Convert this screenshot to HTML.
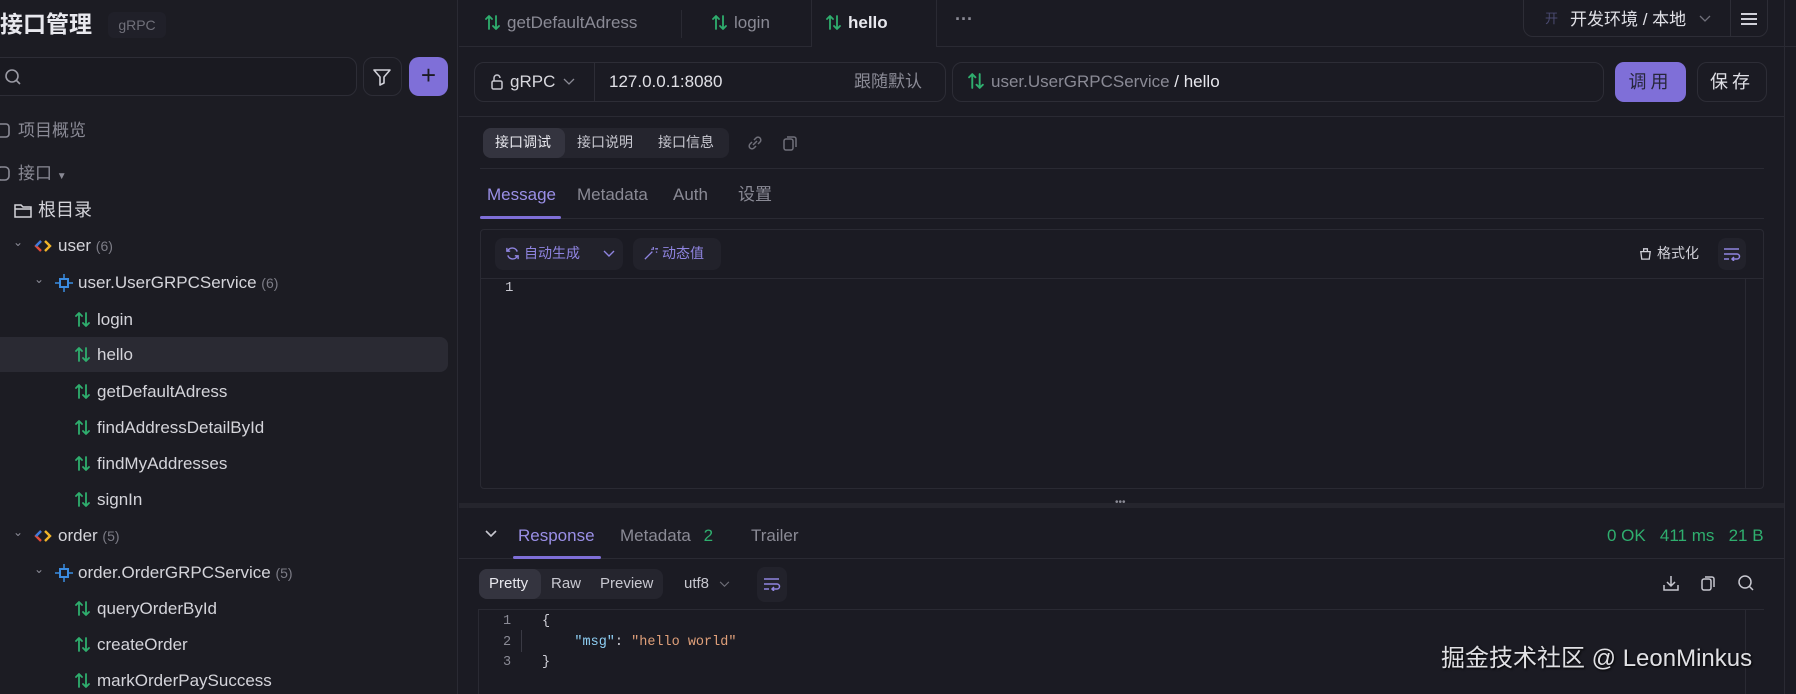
<!DOCTYPE html>
<html><head><meta charset="utf-8">
<style>
*{box-sizing:border-box;margin:0;padding:0}
body{width:1796px;height:694px;background:#1b1b23;font-family:"Liberation Sans","Noto Sans CJK SC",sans-serif;color:#cfcfd6;position:relative;overflow:hidden}
.a{position:absolute;white-space:nowrap;line-height:1.25}
.g{color:#2fae6e}
.mu{color:#8a8a95}
.ln{position:absolute;background:#2a2a33;height:1px}
.tree{font-size:17px;color:#d4d4da}
.cnt{color:#7c7c86;font-size:14px}
svg{position:absolute}
svg.ar{position:static;display:inline-block;vertical-align:-3px;margin-right:6px}
</style></head><body>
<svg width="0" height="0" style="position:absolute"><defs><g id="ar"><path d="M4 15V2M1 5l3-3 3 3M11 2v13M8 12l3 3 3-3" fill="none" stroke="#2fae6e" stroke-width="1.8" stroke-linecap="round" stroke-linejoin="round"/></g></defs></svg>
<!-- sidebar -->
<div class="a" style="left:0;top:0;width:458px;height:694px;background:#1c1c23;border-right:1px solid #2a2a33"></div>
<div class="a" style="left:0;top:10px;font-size:23px;font-weight:bold;color:#e8e8ee">接口管理</div>
<div class="a" style="left:108px;top:12px;width:58px;height:26px;background:#202029;border-radius:6px;font-size:14px;color:#70707a;text-align:center;line-height:26px">gRPC</div>
<div class="a" style="left:-10px;top:57px;width:367px;height:39px;border:1px solid #2d2d36;border-radius:10px;background:#1a1a21"></div>
<svg style="left:4px;top:68px" width="18" height="18" viewBox="0 0 18 18"><circle cx="8" cy="8" r="6" fill="none" stroke="#9a9aa4" stroke-width="1.6"/><path d="M12.5 12.5L16 16" stroke="#9a9aa4" stroke-width="1.6"/></svg>
<div class="a" style="left:363px;top:57px;width:39px;height:39px;border:1px solid #2d2d36;border-radius:10px"></div>
<svg style="left:372px;top:67px" width="20" height="20" viewBox="0 0 20 20"><path d="M2 3h16l-6 7v6l-4 2v-8z" fill="none" stroke="#d0d0d8" stroke-width="1.6" stroke-linejoin="round"/></svg>
<div class="a" style="left:409px;top:57px;width:39px;height:39px;background:#7f6fd8;border-radius:10px;color:#1c1c23;font-size:26px;text-align:center;line-height:37px">+</div>
<svg style="left:-4px;top:122px" width="16" height="18" viewBox="0 0 16 18"><rect x="1" y="2" width="12" height="13" rx="3" fill="none" stroke="#8a8a95" stroke-width="1.6"/></svg>
<div class="a mu" style="left:18px;top:120px;font-size:17px">项目概览</div>
<svg style="left:-4px;top:165px" width="16" height="18" viewBox="0 0 16 18"><rect x="1" y="2" width="12" height="13" rx="4" fill="none" stroke="#8a8a95" stroke-width="1.6"/></svg>
<div class="a mu" style="left:18px;top:163px;font-size:17px">接口 <span style="font-size:10px">▼</span></div>
<svg style="left:13px;top:202px" width="20" height="18" viewBox="0 0 20 18"><path d="M2 3h6l2 2h8v10H2z" fill="none" stroke="#d4d4da" stroke-width="1.5"/><path d="M2 7h16" stroke="#d4d4da" stroke-width="1.5"/></svg>
<div class="a tree" style="left:38px;top:199px;font-size:18px">根目录</div>
<div class="tree">
<div class="a mu" style="left:13px;top:235px;font-size:12px">⌄</div>
<svg style="left:34px;top:238px" width="18" height="16" viewBox="0 0 18 16"><path d="M7 3L2 8l5 5" fill="none" stroke="#e04a3a" stroke-width="2.4"/><path d="M7 3L2 8" stroke="#3a7be0" stroke-width="2.4"/><path d="M11 3l5 5-5 5" fill="none" stroke="#f0b429" stroke-width="2.4"/></svg>
<div class="a" style="left:58px;top:235px">user <span class="cnt">(6)</span></div>
<div class="a mu" style="left:34px;top:272px;font-size:12px">⌄</div>
<svg style="left:54px;top:273px" width="20" height="20" viewBox="0 0 20 20"><rect x="6" y="6" width="8" height="8" fill="none" stroke="#3a8be0" stroke-width="2"/><path d="M10 1v4M10 15v4M1 10h4M15 10h4" stroke="#3a8be0" stroke-width="1.5"/></svg>
<div class="a" style="left:78px;top:272px">user.UserGRPCService <span class="cnt">(6)</span></div>
<div class="a" style="left:0;top:337px;width:448px;height:35px;background:#2a2a33;border-radius:0 8px 8px 0"></div>
<div class="a" style="left:75px;top:309px"><svg class="ar" width="16" height="17"><use href="#ar"/></svg>login</div>
<div class="a" style="left:75px;top:344px"><svg class="ar" width="16" height="17"><use href="#ar"/></svg>hello</div>
<div class="a" style="left:75px;top:381px"><svg class="ar" width="16" height="17"><use href="#ar"/></svg>getDefaultAdress</div>
<div class="a" style="left:75px;top:417px"><svg class="ar" width="16" height="17"><use href="#ar"/></svg>findAddressDetailById</div>
<div class="a" style="left:75px;top:453px"><svg class="ar" width="16" height="17"><use href="#ar"/></svg>findMyAddresses</div>
<div class="a" style="left:75px;top:489px"><svg class="ar" width="16" height="17"><use href="#ar"/></svg>signIn</div>
<div class="a mu" style="left:13px;top:525px;font-size:12px">⌄</div>
<svg style="left:34px;top:528px" width="18" height="16" viewBox="0 0 18 16"><path d="M7 3L2 8l5 5" fill="none" stroke="#e04a3a" stroke-width="2.4"/><path d="M7 3L2 8" stroke="#3a7be0" stroke-width="2.4"/><path d="M11 3l5 5-5 5" fill="none" stroke="#f0b429" stroke-width="2.4"/></svg>
<div class="a" style="left:58px;top:525px">order <span class="cnt">(5)</span></div>
<div class="a mu" style="left:34px;top:562px;font-size:12px">⌄</div>
<svg style="left:54px;top:563px" width="20" height="20" viewBox="0 0 20 20"><rect x="6" y="6" width="8" height="8" fill="none" stroke="#3a8be0" stroke-width="2"/><path d="M10 1v4M10 15v4M1 10h4M15 10h4" stroke="#3a8be0" stroke-width="1.5"/></svg>
<div class="a" style="left:78px;top:562px">order.OrderGRPCService <span class="cnt">(5)</span></div>
<div class="a" style="left:75px;top:598px"><svg class="ar" width="16" height="17"><use href="#ar"/></svg>queryOrderById</div>
<div class="a" style="left:75px;top:634px"><svg class="ar" width="16" height="17"><use href="#ar"/></svg>createOrder</div>
<div class="a" style="left:75px;top:670px"><svg class="ar" width="16" height="17"><use href="#ar"/></svg>markOrderPaySuccess</div>
</div>
<!-- tabs -->
<div class="ln" style="left:459px;top:46px;width:1337px"></div>
<div class="a" style="left:811px;top:0;width:126px;height:47px;background:#1b1b23;border-left:1px solid #2a2a33;border-right:1px solid #2a2a33"></div>
<div class="a" style="left:681px;top:10px;width:1px;height:28px;background:#2a2a33"></div>
<div class="a" style="left:485px;top:12px;font-size:17px;color:#8a8a95"><svg class="ar" width="16" height="17"><use href="#ar"/></svg>getDefaultAdress</div>
<div class="a" style="left:712px;top:12px;font-size:17px;color:#8a8a95"><svg class="ar" width="16" height="17"><use href="#ar"/></svg>login</div>
<div class="a" style="left:826px;top:12px;font-size:17px;color:#e8e8ee;font-weight:bold"><svg class="ar" width="16" height="17"><use href="#ar"/></svg>hello</div>
<div class="a mu" style="left:955px;top:8px;font-size:18px;font-weight:bold">···</div>
<div class="a" style="left:1523px;top:-2px;width:245px;height:39px;border:1px solid #2d2d36;border-radius:0 0 10px 10px"></div>
<div class="a" style="left:1730px;top:0;width:1px;height:37px;background:#2d2d36"></div>
<div class="a" style="left:1545px;top:11px;font-size:13px;color:#4a4a70">开</div>
<div class="a" style="left:1570px;top:9px;font-size:17px;color:#e0e0e6">开发环境 / 本地</div>
<svg style="left:1699px;top:15px" width="12" height="8" viewBox="0 0 12 8"><path d="M1 1l5 5 5-5" fill="none" stroke="#70707a" stroke-width="1.3"/></svg>
<svg style="left:1740px;top:12px" width="18" height="14" viewBox="0 0 18 14"><path d="M1 2h16M1 7h16M1 12h16" stroke="#d0d0d8" stroke-width="2"/></svg>
<div class="a" style="left:1784px;top:0;width:1px;height:694px;background:#2a2a33"></div>
<!-- url row -->
<div class="a" style="left:474px;top:62px;width:472px;height:40px;border:1px solid #2d2d36;border-radius:10px"></div>
<div class="a" style="left:594px;top:63px;width:1px;height:38px;background:#2d2d36"></div>
<svg style="left:490px;top:73px" width="14" height="18" viewBox="0 0 14 18"><rect x="2" y="8" width="10" height="8" rx="1.5" fill="none" stroke="#c8c8d0" stroke-width="1.5"/><path d="M4 8V5a3 3 0 0 1 6 0" fill="none" stroke="#c8c8d0" stroke-width="1.5"/></svg>
<div class="a" style="left:510px;top:71px;font-size:17px;color:#d8d8de">gRPC</div>
<svg style="left:563px;top:78px" width="12" height="8" viewBox="0 0 12 8"><path d="M1 1l5 5 5-5" fill="none" stroke="#8a8a95" stroke-width="1.3"/></svg>
<div class="a" style="left:609px;top:71px;font-size:17px;color:#e0e0e6">127.0.0.1:8080</div>
<div class="a mu" style="left:854px;top:71px;font-size:17px;line-height:21px">跟随默认</div>
<div class="a" style="left:952px;top:62px;width:652px;height:40px;border:1px solid #2d2d36;border-radius:10px"></div>
<div class="a" style="left:968px;top:71px;font-size:17px;color:#8a8a95"><svg class="ar" width="17" height="18" viewBox="0 0 16 17"><use href="#ar"/></svg>user.UserGRPCService <span style="color:#e8e8ee">/ hello</span></div>
<div class="a" style="left:1615px;top:62px;width:71px;height:40px;background:#7f6fd8;border-radius:9px;font-size:18px;color:#26263a;text-align:center;line-height:40px;letter-spacing:4px">调用</div>
<div class="a" style="left:1697px;top:62px;width:70px;height:40px;border:1px solid #2d2d36;border-radius:10px;font-size:18px;color:#e0e0e6;text-align:center;line-height:38px;letter-spacing:4px">保存</div>
<div class="ln" style="left:459px;top:116px;width:1325px"></div>
<!-- segmented -->
<div class="a" style="left:483px;top:128px;width:246px;height:30px;background:#25252e;border-radius:8px"></div>
<div class="a" style="left:483px;top:128px;width:82px;height:30px;background:#34343f;border-radius:8px"></div>
<div class="a" style="left:495px;top:134px;font-size:14px;color:#e8e8ee">接口调试</div>
<div class="a" style="left:577px;top:134px;font-size:14px;color:#c8c8d0">接口说明</div>
<div class="a" style="left:658px;top:134px;font-size:14px;color:#c8c8d0">接口信息</div>
<svg style="left:746px;top:134px" width="18" height="18" viewBox="0 0 18 18"><path d="M7 11l4-4M6 8L4 10a2.5 2.5 0 0 0 4 4l2-2M12 10l2-2a2.5 2.5 0 0 0-4-4L8 6" fill="none" stroke="#70707a" stroke-width="1.5"/></svg>
<svg style="left:781px;top:134px" width="18" height="18" viewBox="0 0 18 18"><rect x="3" y="5" width="9" height="11" rx="2" fill="none" stroke="#70707a" stroke-width="1.5"/><path d="M6 3h7a2 2 0 0 1 2 2v8" fill="none" stroke="#70707a" stroke-width="1.5"/></svg>
<div class="ln" style="left:480px;top:168px;width:1284px"></div>
<div class="a" style="left:487px;top:184px;font-size:17px;color:#9a8fe6">Message</div>
<div class="a mu" style="left:577px;top:184px;font-size:17px">Metadata</div>
<div class="a mu" style="left:673px;top:184px;font-size:17px">Auth</div>
<div class="a mu" style="left:738px;top:184px;font-size:17px;line-height:21px">设置</div>
<div class="ln" style="left:480px;top:218px;width:1284px"></div>
<div class="a" style="left:480px;top:216px;width:81px;height:3px;background:#7f6fd8;border-radius:2px"></div>
<!-- editor -->
<div class="a" style="left:480px;top:229px;width:1284px;height:260px;border:1px solid #2a2a33;border-radius:4px"></div>
<div class="a" style="left:495px;top:238px;width:128px;height:32px;background:#22222b;border-radius:8px"></div>
<svg style="left:505px;top:246px" width="15" height="15" viewBox="0 0 16 16"><path d="M13 6a5.5 5.5 0 0 0-10-1M3 10a5.5 5.5 0 0 0 10 1M2 2v3.5h3.5M14 14v-3.5h-3.5" fill="none" stroke="#8f84e0" stroke-width="1.5"/></svg>
<div class="a" style="left:524px;top:245px;font-size:14px;color:#8f84e0">自动生成</div>
<svg style="left:603px;top:250px" width="12" height="8" viewBox="0 0 12 8"><path d="M1 1l5 5 5-5" fill="none" stroke="#8f84e0" stroke-width="1.4"/></svg>
<div class="a" style="left:633px;top:238px;width:88px;height:32px;background:#22222b;border-radius:8px"></div>
<svg style="left:643px;top:246px" width="15" height="15" viewBox="0 0 16 16"><path d="M2 14L10 6M11 1v3M13 3h3M9 3l1 1M14 6l1 1" fill="none" stroke="#8f84e0" stroke-width="1.4"/></svg>
<div class="a" style="left:662px;top:245px;font-size:14px;color:#8f84e0">动态值</div>
<svg style="left:1638px;top:246px" width="15" height="15" viewBox="0 0 16 16"><path d="M3 6h10l-1 8H4zM6 6V3h4v3" fill="none" stroke="#d0d0d8" stroke-width="1.4"/></svg>
<div class="a" style="left:1657px;top:245px;font-size:14px;color:#d0d0d8">格式化</div>
<div class="a" style="left:1718px;top:238px;width:28px;height:32px;background:#22222b;border-radius:8px"></div>
<svg style="left:1723px;top:247px" width="18" height="14" viewBox="0 0 18 14"><path d="M1 2h15M1 7h13a2.5 2.5 0 0 1 0 5h-4M1 12h5M11 10l-2 2 2 2" fill="none" stroke="#8f84e0" stroke-width="1.5"/></svg>
<div class="ln" style="left:481px;top:278px;width:1282px"></div>
<div class="a" style="left:1745px;top:279px;width:1px;height:209px;background:#2a2a33"></div>
<div class="a" style="left:505px;top:280px;font-size:14px;color:#c8c8d0;font-family:'Liberation Mono',monospace">1</div>
<!-- resizer -->
<div class="a" style="left:459px;top:503px;width:1325px;height:5px;background:#25252d"></div>
<div class="a mu" style="left:1115px;top:497px;font-size:10px">•••</div>
<!-- response -->
<svg style="left:485px;top:530px" width="12" height="8" viewBox="0 0 12 8"><path d="M1 1l5 5 5-5" fill="none" stroke="#c8c8d0" stroke-width="1.6"/></svg>
<div class="a" style="left:518px;top:525px;font-size:17px;color:#9a8fe6">Response</div>
<div class="a mu" style="left:620px;top:525px;font-size:17px">Metadata <span class="g" style="margin-left:8px">2</span></div>
<div class="a mu" style="left:751px;top:525px;font-size:17px">Trailer</div>
<div class="a g" style="left:1607px;top:525px;font-size:17px">0 OK &nbsp; 411 ms &nbsp; 21 B</div>
<div class="ln" style="left:459px;top:558px;width:1325px"></div>
<div class="a" style="left:513px;top:556px;width:88px;height:3px;background:#7f6fd8;border-radius:2px"></div>
<div class="a" style="left:479px;top:569px;width:184px;height:30px;background:#25252e;border-radius:8px"></div>
<div class="a" style="left:479px;top:569px;width:62px;height:30px;background:#34343f;border-radius:8px"></div>
<div class="a" style="left:489px;top:575px;font-size:15px;color:#e8e8ee">Pretty</div>
<div class="a" style="left:551px;top:575px;font-size:15px;color:#c8c8d0">Raw</div>
<div class="a" style="left:600px;top:575px;font-size:15px;color:#c8c8d0">Preview</div>
<div class="a" style="left:684px;top:575px;font-size:15px;color:#c8c8d0">utf8</div>
<svg style="left:719px;top:581px" width="11" height="7" viewBox="0 0 12 8"><path d="M1 1l5 5 5-5" fill="none" stroke="#70707a" stroke-width="1.3"/></svg>
<div class="a" style="left:757px;top:567px;width:30px;height:35px;background:#22222b;border-radius:8px"></div>
<svg style="left:763px;top:577px" width="18" height="14" viewBox="0 0 18 14"><path d="M1 2h15M1 7h13a2.5 2.5 0 0 1 0 5h-4M1 12h5M11 10l-2 2 2 2" fill="none" stroke="#8f84e0" stroke-width="1.5"/></svg>
<svg style="left:1662px;top:574px" width="18" height="18" viewBox="0 0 18 18"><path d="M9 2v9M5 8l4 4 4-4M2 11v5h14v-5" fill="none" stroke="#c8c8d0" stroke-width="1.5"/></svg>
<svg style="left:1699px;top:574px" width="18" height="18" viewBox="0 0 18 18"><rect x="3" y="5" width="9" height="11" rx="2" fill="none" stroke="#c8c8d0" stroke-width="1.5"/><path d="M6 3h7a2 2 0 0 1 2 2v8" fill="none" stroke="#c8c8d0" stroke-width="1.5"/></svg>
<svg style="left:1737px;top:574px" width="18" height="18" viewBox="0 0 18 18"><circle cx="8" cy="8" r="6" fill="none" stroke="#c8c8d0" stroke-width="1.5"/><path d="M12.5 12.5L16 16" stroke="#c8c8d0" stroke-width="1.5"/></svg>
<div class="ln" style="left:478px;top:609px;width:1286px"></div>
<div class="a" style="left:478px;top:610px;width:1px;height:84px;background:#2a2a33"></div>
<div class="a" style="left:1745px;top:610px;width:1px;height:84px;background:#2a2a33"></div>
<div class="a" style="left:521px;top:630px;width:1px;height:22px;background:#3a3a44"></div>
<div class="a" style="font-family:'Liberation Mono',monospace;font-size:13.5px;left:503px;top:612px;line-height:20.5px;color:#8a8a95">1<br>2<br>3</div>
<div class="a" style="font-family:'Liberation Mono',monospace;font-size:13.5px;left:542px;top:612px;line-height:20.5px;color:#d0d0d8">{<br>&nbsp;&nbsp;&nbsp;&nbsp;<span style="color:#8fd0f5">"msg"</span>: <span style="color:#e0a07a">"hello world"</span><br>}</div>
<div class="a" style="left:1441px;top:644px;font-size:24px;color:#e0e0e4;text-shadow:1px 1px 2px #000">掘金技术社区 @ LeonMinkus</div>
</body></html>
